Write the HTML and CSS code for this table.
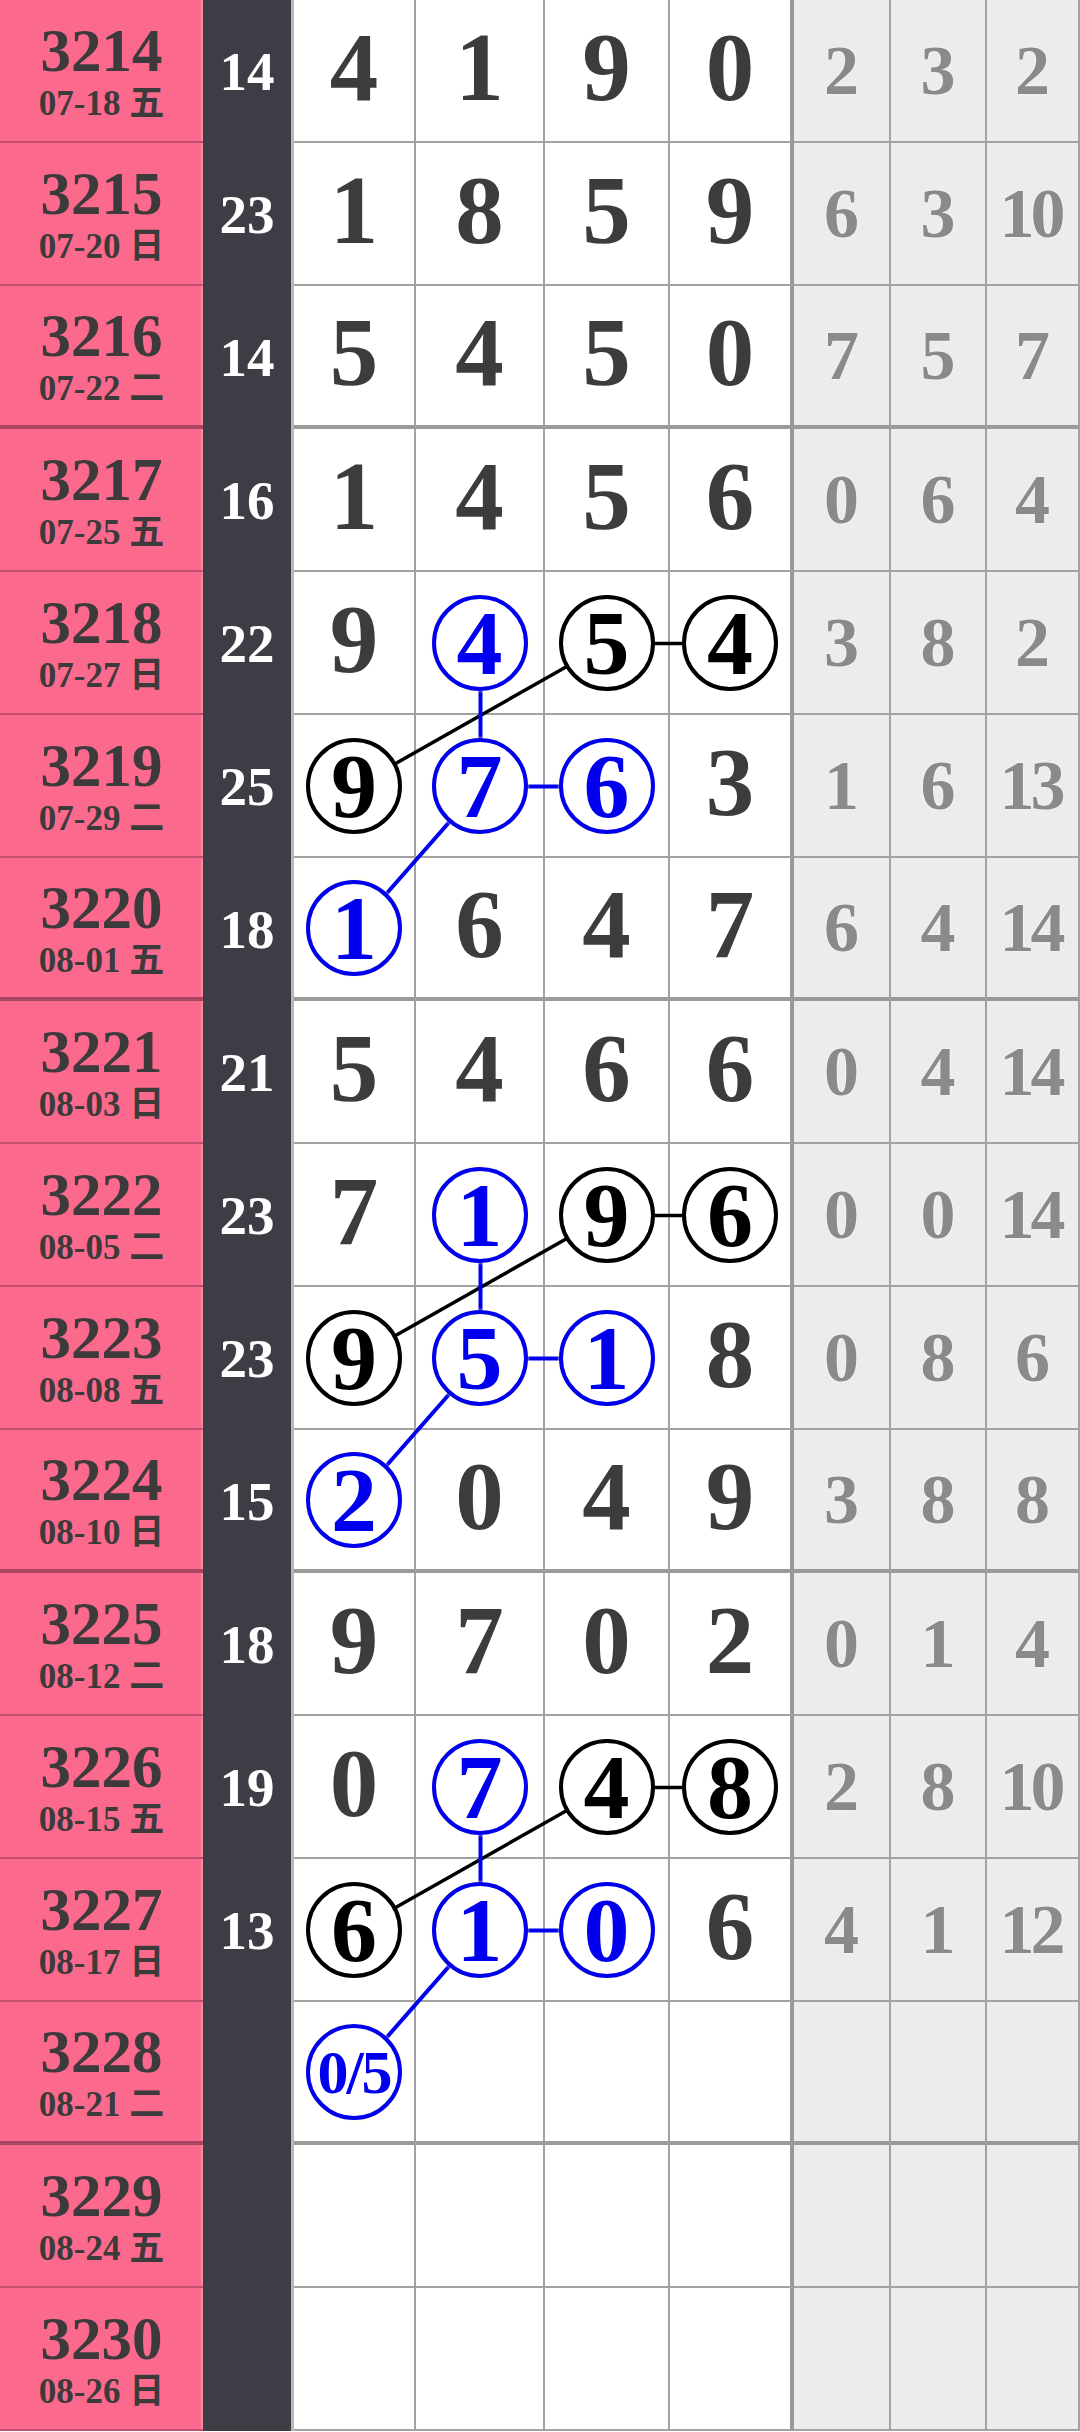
FILE: index.html
```html
<!DOCTYPE html>
<html lang="zh">
<head>
<meta charset="utf-8">
<title>走势图</title>
<link rel="stylesheet" href="styles.css">
</head>
<body>
<div class="board">
  <div class="row"><div class="issue"><b>3214</b><span>07-18 五</span></div><div class="sum">14</div><div class="c">4</div><div class="c">1</div><div class="c">9</div><div class="c end">0</div><div class="g">2</div><div class="g">3</div><div class="g">2</div></div>
  <div class="row"><div class="issue"><b>3215</b><span>07-20 日</span></div><div class="sum">23</div><div class="c">1</div><div class="c">8</div><div class="c">5</div><div class="c end">9</div><div class="g">6</div><div class="g">3</div><div class="g">10</div></div>
  <div class="row sep"><div class="issue"><b>3216</b><span>07-22 二</span></div><div class="sum">14</div><div class="c">5</div><div class="c">4</div><div class="c">5</div><div class="c end">0</div><div class="g">7</div><div class="g">5</div><div class="g">7</div></div>

  <div class="row"><div class="issue"><b>3217</b><span>07-25 五</span></div><div class="sum">16</div><div class="c">1</div><div class="c">4</div><div class="c">5</div><div class="c end">6</div><div class="g">0</div><div class="g">6</div><div class="g">4</div></div>
  <div class="row"><div class="issue"><b>3218</b><span>07-27 日</span></div><div class="sum">22</div><div class="c">9</div><div class="c"><i class="ring blue">4</i></div><div class="c"><i class="ring">5</i></div><div class="c end"><i class="ring">4</i></div><div class="g">3</div><div class="g">8</div><div class="g">2</div></div>
  <div class="row"><div class="issue"><b>3219</b><span>07-29 二</span></div><div class="sum">25</div><div class="c"><i class="ring">9</i></div><div class="c"><i class="ring blue">7</i></div><div class="c"><i class="ring blue">6</i></div><div class="c end">3</div><div class="g">1</div><div class="g">6</div><div class="g">13</div></div>
  <div class="row sep"><div class="issue"><b>3220</b><span>08-01 五</span></div><div class="sum">18</div><div class="c"><i class="ring blue">1</i></div><div class="c">6</div><div class="c">4</div><div class="c end">7</div><div class="g">6</div><div class="g">4</div><div class="g">14</div></div>

  <div class="row"><div class="issue"><b>3221</b><span>08-03 日</span></div><div class="sum">21</div><div class="c">5</div><div class="c">4</div><div class="c">6</div><div class="c end">6</div><div class="g">0</div><div class="g">4</div><div class="g">14</div></div>
  <div class="row"><div class="issue"><b>3222</b><span>08-05 二</span></div><div class="sum">23</div><div class="c">7</div><div class="c"><i class="ring blue">1</i></div><div class="c"><i class="ring">9</i></div><div class="c end"><i class="ring">6</i></div><div class="g">0</div><div class="g">0</div><div class="g">14</div></div>
  <div class="row"><div class="issue"><b>3223</b><span>08-08 五</span></div><div class="sum">23</div><div class="c"><i class="ring">9</i></div><div class="c"><i class="ring blue">5</i></div><div class="c"><i class="ring blue">1</i></div><div class="c end">8</div><div class="g">0</div><div class="g">8</div><div class="g">6</div></div>
  <div class="row sep"><div class="issue"><b>3224</b><span>08-10 日</span></div><div class="sum">15</div><div class="c"><i class="ring blue">2</i></div><div class="c">0</div><div class="c">4</div><div class="c end">9</div><div class="g">3</div><div class="g">8</div><div class="g">8</div></div>

  <div class="row"><div class="issue"><b>3225</b><span>08-12 二</span></div><div class="sum">18</div><div class="c">9</div><div class="c">7</div><div class="c">0</div><div class="c end">2</div><div class="g">0</div><div class="g">1</div><div class="g">4</div></div>
  <div class="row"><div class="issue"><b>3226</b><span>08-15 五</span></div><div class="sum">19</div><div class="c">0</div><div class="c"><i class="ring blue">7</i></div><div class="c"><i class="ring">4</i></div><div class="c end"><i class="ring">8</i></div><div class="g">2</div><div class="g">8</div><div class="g">10</div></div>
  <div class="row"><div class="issue"><b>3227</b><span>08-17 日</span></div><div class="sum">13</div><div class="c"><i class="ring">6</i></div><div class="c"><i class="ring blue">1</i></div><div class="c"><i class="ring blue">0</i></div><div class="c end">6</div><div class="g">4</div><div class="g">1</div><div class="g">12</div></div>
  <div class="row sep"><div class="issue"><b>3228</b><span>08-21 二</span></div><div class="sum"></div><div class="c"><i class="ring blue small">0/5</i></div><div class="c"></div><div class="c"></div><div class="c end"></div><div class="g"></div><div class="g"></div><div class="g"></div></div>

  <div class="row"><div class="issue"><b>3229</b><span>08-24 五</span></div><div class="sum"></div><div class="c"></div><div class="c"></div><div class="c"></div><div class="c end"></div><div class="g"></div><div class="g"></div><div class="g"></div></div>
  <div class="row"><div class="issue"><b>3230</b><span>08-26 日</span></div><div class="sum"></div><div class="c"></div><div class="c"></div><div class="c"></div><div class="c end"></div><div class="g"></div><div class="g"></div><div class="g"></div></div>

  <svg class="links" width="1080" height="2432" viewBox="0 0 1080 2432" aria-hidden="true">
    <g class="grp">
      <line class="k" x1="355" y1="786.5" x2="607.5" y2="643.5"/>
      <line class="k" x1="607.5" y1="643.5" x2="732" y2="643.5"/>
      <line class="b" x1="480.5" y1="643.5" x2="480.5" y2="786.5"/>
      <line class="b" x1="480.5" y1="786.5" x2="607.5" y2="786.5"/>
      <line class="b" x1="480.5" y1="786.5" x2="355" y2="929.5"/>
    </g>
    <g class="grp" transform="translate(0 572)">
      <line class="k" x1="355" y1="786.5" x2="607.5" y2="643.5"/>
      <line class="k" x1="607.5" y1="643.5" x2="732" y2="643.5"/>
      <line class="b" x1="480.5" y1="643.5" x2="480.5" y2="786.5"/>
      <line class="b" x1="480.5" y1="786.5" x2="607.5" y2="786.5"/>
      <line class="b" x1="480.5" y1="786.5" x2="355" y2="929.5"/>
    </g>
    <g class="grp" transform="translate(0 1144)">
      <line class="k" x1="355" y1="786.5" x2="607.5" y2="643.5"/>
      <line class="k" x1="607.5" y1="643.5" x2="732" y2="643.5"/>
      <line class="b" x1="480.5" y1="643.5" x2="480.5" y2="786.5"/>
      <line class="b" x1="480.5" y1="786.5" x2="607.5" y2="786.5"/>
      <line class="b" x1="480.5" y1="786.5" x2="355" y2="929.5"/>
    </g>
  </svg>
</div>
</body>
</html>
```
FILE: styles.css
```css
html, body {
  margin: 0;
  padding: 0;
  background: #ffffff;
}

.board {
  position: relative;
  width: 1080px;
  height: 2432px;
  overflow: hidden;
  font-family: "Liberation Serif", "Noto Sans CJK SC", serif;
  font-weight: bold;
}

.row {
  display: grid;
  grid-template-columns: 203px 91px 122px 129px 125px 124px 97px 96px 93px;
  height: 143px;
}

.row > div {
  box-sizing: border-box;
  display: flex;
  align-items: center;
  justify-content: center;
  border-bottom: 2px solid #a2a2a2;
  border-right: 2px solid #a2a2a2;
}

.row.sep > div {
  border-bottom-width: 4px;
  border-bottom-color: #9a9a9a;
}

.issue {
  flex-direction: column;
  gap: 5px;
  background: #fb6a8c;
  color: #3d3a3c;
  border-right: none !important;
  border-bottom-color: #c2506e !important;
  box-shadow: inset -2px 0 0 #f48aa3;
}

.row.sep .issue {
  border-bottom-color: #a84660 !important;
}

.issue b {
  font-size: 61px;
  line-height: 1;
}

.issue span {
  font-size: 35px;
  line-height: 1;
}

.sum {
  background: #3e3d46;
  color: #ffffff;
  font-size: 55px;
  border-bottom: none !important;
  border-right: 3px solid #b9b9b9 !important;
}

.c {
  background: #ffffff;
  color: #3c3c3e;
  font-size: 97px;
  padding-bottom: 6px;
}

.c.end {
  border-right: 4px solid #999999 !important;
}

.g {
  background: #ececec;
  color: #8a8a8a;
  font-size: 70px;
  letter-spacing: -4px;
  text-indent: -4px;
  text-shadow: 0 0 2px #ffffff;
}

.ring {
  position: relative;
  z-index: 2;
  box-sizing: border-box;
  width: 96px;
  height: 96px;
  margin-top: 6px;
  border: 4px solid #000000;
  border-radius: 50%;
  background: #ffffff;
  color: #000000;
  font-style: normal;
  font-size: 92px;
  line-height: 1;
  display: flex;
  align-items: center;
  justify-content: center;
}

.ring.blue {
  border-color: #0000ee;
  color: #0000ee;
  box-shadow: 0 0 3px rgba(255, 250, 190, 0.9);
}

.ring.small {
  font-size: 62px;
  letter-spacing: -2px;
}

.links {
  position: absolute;
  left: 0;
  top: 0;
  z-index: 1;
  pointer-events: none;
}

.links line {
  stroke-width: 4;
}

.links .k {
  stroke: #000000;
  stroke-width: 3.5;
}

.links .b {
  stroke: #0000ee;
}
```
